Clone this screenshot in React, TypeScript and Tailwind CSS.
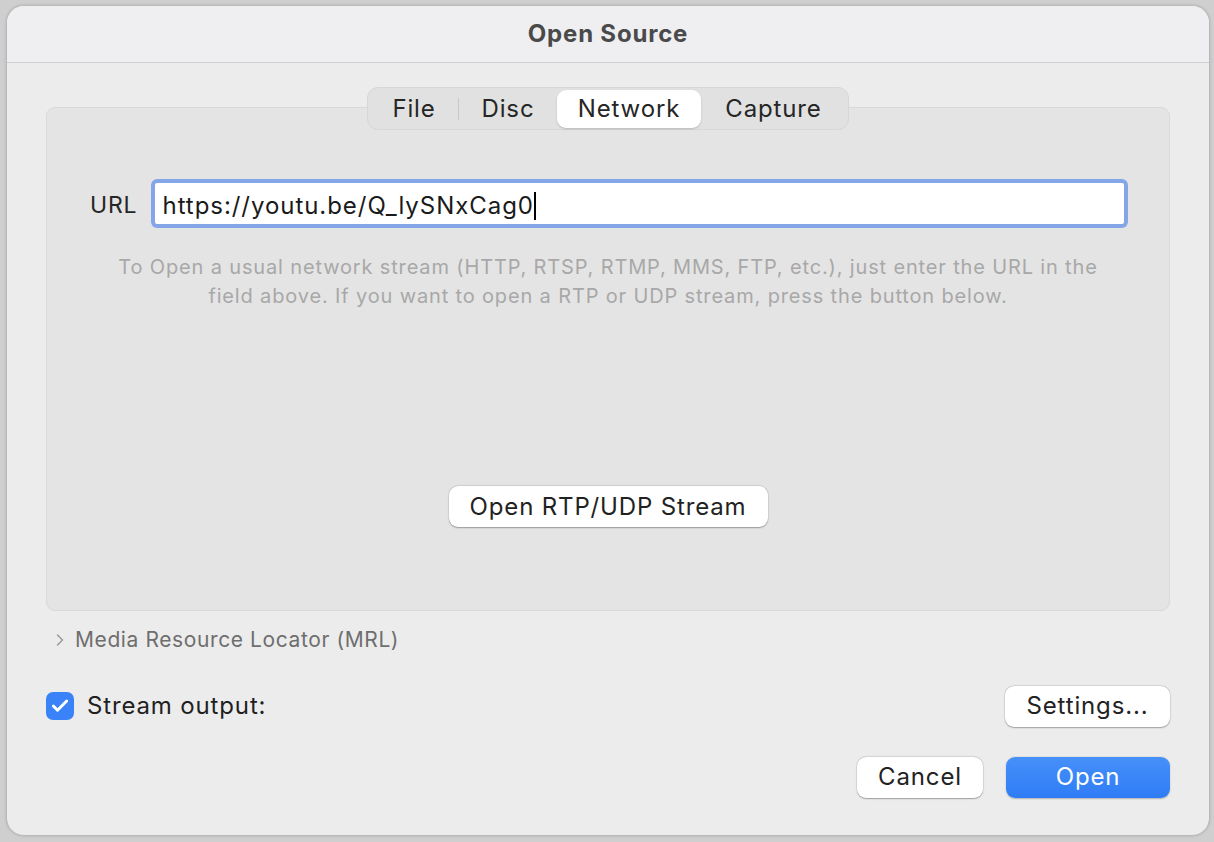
import { Check, ChevronRight } from 'lucide-react'

const tabs = [
  { label: 'File', w: 'w-[88px]' },
  { label: 'Disc', w: 'w-[98px]' },
  { label: 'Network', w: 'w-[144px]' },
  { label: 'Capture', w: 'w-[145px]' },
]

function Segmented() {
  return (
    <div className="flex items-center h-[43px] p-[2px] rounded-[11px] bg-[#e1e1e1] border border-[#d7d7d7]">
      {tabs.map((t, i) => {
        const active = t.label === 'Network'
        return (
          <div key={t.label} className="flex items-center">
            {i === 1 && <div className="w-px h-[22px] bg-[#c9c9c9]" />}
            <div
              className={
                'h-[38px] flex items-center justify-center rounded-[9px] text-[24px] text-[#262626] ' +
                t.w +
                (active ? ' bg-white shadow-[0_1px_2px_rgba(0,0,0,0.18)]' : '')
              }
            >
              {t.label}
            </div>
          </div>
        )
      })}
    </div>
  )
}

function MacButton({ children, className = '' }: { children: React.ReactNode; className?: string }) {
  return (
    <button
      className={
        'h-[41px] flex items-center justify-center rounded-[9px] bg-white text-[24px] text-[#222] shadow-[0_0.5px_1.5px_rgba(0,0,0,0.3),0_0_0_0.5px_rgba(0,0,0,0.08)] ' +
        className
      }
    >
      {children}
    </button>
  )
}

export default function App() {
  return (
    <div
      className="w-[1214px] h-[842px] bg-[#cfcfcf] pt-[5px] pl-[6px] tracking-[0.85px]"
      style={{ fontFamily: 'Inter, "Noto Sans", sans-serif' }}
    >
      <div className="w-[1204px] h-[831px] rounded-[18px] bg-[#ececec] border border-[#b9b9b9] overflow-hidden flex flex-col shadow-[0_0_3px_rgba(0,0,0,0.15)]">
        <div className="h-[57px] shrink-0 bg-[#efeff2] border-b border-[#cfcfd2] flex items-center justify-center">
          <span className="text-[24px] font-bold text-[#4a4a4a] tracking-[0.8px]">Open Source</span>
        </div>

        <div className="flex-1 flex flex-col px-[39px]">
          <div className="mt-[24px] flex justify-center relative z-10">
            <Segmented />
          </div>

          <div className="-mt-[23px] h-[504px] rounded-[9px] bg-[#e4e4e4] border border-[#d9d9d9] flex flex-col items-center">
            <div className="mt-[71px] w-full flex items-center pl-[43px] pr-[41px]">
              <span className="text-[23px] text-[#262626] mr-[14px] pt-[4px]">URL</span>
              <div className="flex-1 h-[49px] rounded-[6px] bg-white ring-[4px] ring-inset ring-[#84a6e8] flex items-center pl-[11px] pt-[4px]">
                <span className="text-[24px] text-[#1a1a1a] tracking-[0.95px]">https://youtu.be/Q_lySNxCag0</span>
                <span className="w-[2px] h-[28px] bg-black" />
              </div>
            </div>

            <p className="mt-[25px] text-center text-[20px] leading-[29px] text-[#a8a8a8] w-[1060px]">
              To Open a usual network stream (HTTP, RTSP, RTMP, MMS, FTP, etc.), just enter the URL in the
              <br />
              field above. If you want to open a RTP or UDP stream, press the button below.
            </p>

            <MacButton className="mt-[175px] w-[319px] h-[40px]">Open RTP/UDP Stream</MacButton>
          </div>

          <div className="mt-[13px] flex items-center gap-[5px] pl-[4px]">
            <ChevronRight className="w-[20px] h-[20px] text-[#9a9a9a]" strokeWidth={1.8} />
            <span className="text-[21px] text-[#6e6e6e] tracking-[0.6px]">Media Resource Locator (MRL)</span>
          </div>

          <div className="mt-[30px] flex items-center justify-between">
            <div className="flex items-center gap-[13px]">
              <div className="w-[28px] h-[28px] rounded-[7px] bg-[#3a82f7] flex items-center justify-center">
                <Check className="w-[20px] h-[20px] text-white" strokeWidth={3.5} />
              </div>
              <span className="text-[24px] text-[#1f1f1f]">Stream output:</span>
            </div>
            <MacButton className="w-[165px]">Settings...</MacButton>
          </div>

          <div className="mt-[30px] flex justify-end gap-[23px]">
            <MacButton className="w-[126px]">Cancel</MacButton>
            <button className="w-[164px] h-[41px] rounded-[9px] bg-gradient-to-b from-[#4690fa] to-[#2f7cf6] text-white text-[24px] shadow-[0_0.5px_1.5px_rgba(0,0,0,0.25)]">
              Open
            </button>
          </div>
        </div>
      </div>
    </div>
  )
}
